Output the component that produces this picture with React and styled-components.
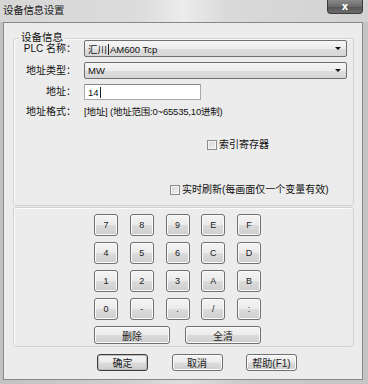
import React from 'react'
import styled, { createGlobalStyle } from 'styled-components'

const GlobalStyle = createGlobalStyle`
  html, body {
    margin: 0;
    padding: 0;
    background: #c8c8c8;
  }
  body {
    font-family: "Liberation Sans", "Noto Sans CJK SC", sans-serif;
    font-size: 10px;
    color: #111;
  }
`

const Window = styled.div`
  width: 368px;
  height: 384px;
  display: flex;
  flex-direction: column;
  box-sizing: border-box;
  background: linear-gradient(90deg, #c2c2c2 0%, #cfcfcf 35%, #dedede 50%, #cbcbcb 65%, #c4c4c4 100%);
  overflow: hidden;
`

const TitleBar = styled.div`
  height: 22px;
  flex: none;
  display: flex;
  justify-content: space-between;
  align-items: flex-start;
  background: linear-gradient(90deg, #d6d6d6 0%, #dcdcdc 38%, #ececec 50%, #d9d9d9 62%, #d2d2d2 100%);
`

const Title = styled.div`
  padding: 4px 0 0 3px;
  font-size: 10.5px;
  line-height: 13px;
  letter-spacing: -0.3px;
  color: #1a1a1a;
`

const CloseButton = styled.div`
  width: 36px;
  height: 14px;
  margin-right: 5px;
  box-sizing: border-box;
  border: 1px solid #3c3c3c;
  border-top: none;
  border-radius: 0 0 4px 4px;
  background: linear-gradient(#8a8a8a 0%, #6a6a6a 50%, #555 51%, #6c6c6c 100%);
  display: flex;
  align-items: center;
  justify-content: center;
  color: #fff;
  font-weight: bold;
  font-size: 10px;
  line-height: 10px;
  font-family: "DejaVu Sans", sans-serif;
`

const Content = styled.div`
  flex: 1;
  margin: 0 5px 4px 3px;
  border: 1px solid #888;
  background: #ececec;
  padding: 15px 8px 0 9px;
  display: flex;
  flex-direction: column;
`

const Group = styled.div`
  height: ${p => p.$h}px;
  margin-top: ${p => p.$mt || 0}px;
  box-sizing: border-box;
  flex: none;
  border: 1px solid #d2d2d2;
  box-shadow: inset 1px 1px 0 #fafafa;
  border-radius: 3px;
  display: flex;
  flex-direction: column;
  padding: 0 6px 0 0;
`

const Legend = styled.div`
  align-self: flex-start;
  margin: -8px 0 -4px 5px;
  padding: 0 2px;
  height: 12px;
  line-height: 12px;
  font-size: 10.5px;
  background: #ececec;
  font-family: "Noto Sans CJK SC", sans-serif;
`

const Form = styled.div`
  display: grid;
  grid-template-columns: 62px 1fr;
  column-gap: 8px;
  row-gap: 5px;
  margin-top: 1px;
  align-items: center;
`

const Label = styled.div`
  text-align: right;
  font-size: 10px;
  line-height: 12px;
  white-space: nowrap;
`

const Select = styled.div`
  height: 17px;
  box-sizing: border-box;
  border: 1px solid #6f6f6f;
  border-radius: 2px;
  background: linear-gradient(#f6f6f6 0%, #ececec 50%, #dedede 51%, #d6d6d6 100%);
  display: flex;
  align-items: center;
  justify-content: space-between;
  padding: 0 5px 0 3px;
  font-size: 9.5px;
`

const Arrow = styled.span`
  width: 0;
  height: 0;
  border-left: 3px solid transparent;
  border-right: 3px solid transparent;
  border-top: 3px solid #111;
`

const Input = styled.div`
  width: 117px;
  height: 16px;
  box-sizing: border-box;
  border: 1px solid #a8a8a8;
  border-top-color: #8a8a8a;
  background: #fff;
  display: flex;
  align-items: center;
  padding-left: 3px;
  font-size: 9.5px;
`

const Caret = styled.span`
  display: inline-block;
  width: 1px;
  height: 11px;
  background: #222;
  margin: 0 1px;
  vertical-align: middle;
`

const Info = styled.div`
  font-size: 9.5px;
  line-height: 14px;
  letter-spacing: -0.2px;
`

const CheckRow = styled.label`
  display: flex;
  align-items: center;
  gap: 2px;
  margin: ${p => p.$mt}px 0 0 ${p => p.$ml}px;
  font-size: 10px;
  line-height: 12px;
`

const Box = styled.span`
  width: 10px;
  height: 10px;
  box-sizing: border-box;
  border: 1px solid #8c8c8c;
  background: linear-gradient(135deg, #d6d6d6, #f2f2f2);
  box-shadow: inset 0 0 0 1px #f4f4f4;
`

const Keypad = styled.div`
  display: grid;
  grid-template-columns: repeat(5, 24px);
  grid-auto-rows: 22px;
  column-gap: 11.75px;
  row-gap: 6px;
  margin: 6px 0 0 80px;
`

const Button = styled.div`
  box-sizing: border-box;
  width: ${p => p.$w || 24}px;
  height: ${p => p.$h || 22}px;
  border: 1px solid ${p => (p.$default ? '#3d3d3d' : '#707070')};
  border-radius: 3px;
  background: linear-gradient(#f4f4f4 0%, #ebebeb 48%, #dcdcdc 52%, #cdcdcd 100%);
  box-shadow: inset 0 0 0 1px ${p => (p.$default ? '#bdbdbd' : '#fbfbfb')};
  display: flex;
  align-items: center;
  justify-content: center;
  font-size: ${p => p.$fs || 10}px;
  color: #222;
`

const WideRow = styled.div`
  display: flex;
  gap: 15px;
  margin: 6px 0 0 80px;
`

const Footer = styled.div`
  display: flex;
  gap: 23.5px;
  margin: 7px 0 0 84px;
`

const keys = ['7', '8', '9', 'E', 'F', '4', '5', '6', 'C', 'D', '1', '2', '3', 'A', 'B', '0', '-', '.', '/', ':']

export default function App() {
  return (
    <>
      <GlobalStyle />
      <Window>
        <TitleBar>
          <Title>设备信息设置</Title>
          <CloseButton>x</CloseButton>
        </TitleBar>
        <Content>
          <Group $h={168}>
            <Legend>设备信息</Legend>
            <Form>
              <Label>PLC 名称：</Label>
              <Select>
                <span>汇川<Caret />AM600 Tcp</span>
                <Arrow />
              </Select>
              <Label>地址类型：</Label>
              <Select>
                <span>MW</span>
                <Arrow />
              </Select>
              <Label>地址：</Label>
              <Input>14<Caret /></Input>
              <Label>地址格式：</Label>
              <Info>[地址] (地址范围:0~65535,10进制)</Info>
            </Form>
            <CheckRow $mt={20} $ml={193}>
              <Box />
              索引寄存器
            </CheckRow>
            <CheckRow $mt={33} $ml={156}>
              <Box />
              实时刷新(每画面仅一个变量有效)
            </CheckRow>
          </Group>
          <Group $h={140} $mt={1}>
            <Keypad>
              {keys.map(k => (
                <Button key={k} $fs={9}>{k}</Button>
              ))}
            </Keypad>
            <WideRow>
              <Button $w={76} $h={18}>删除</Button>
              <Button $w={76} $h={18}>全清</Button>
            </WideRow>
          </Group>
          <Footer>
            <Button $w={51} $h={17} $default>确定</Button>
            <Button $w={51} $h={17}>取消</Button>
            <Button $w={51} $h={17}>帮助(F1)</Button>
          </Footer>
        </Content>
      </Window>
    </>
  )
}
